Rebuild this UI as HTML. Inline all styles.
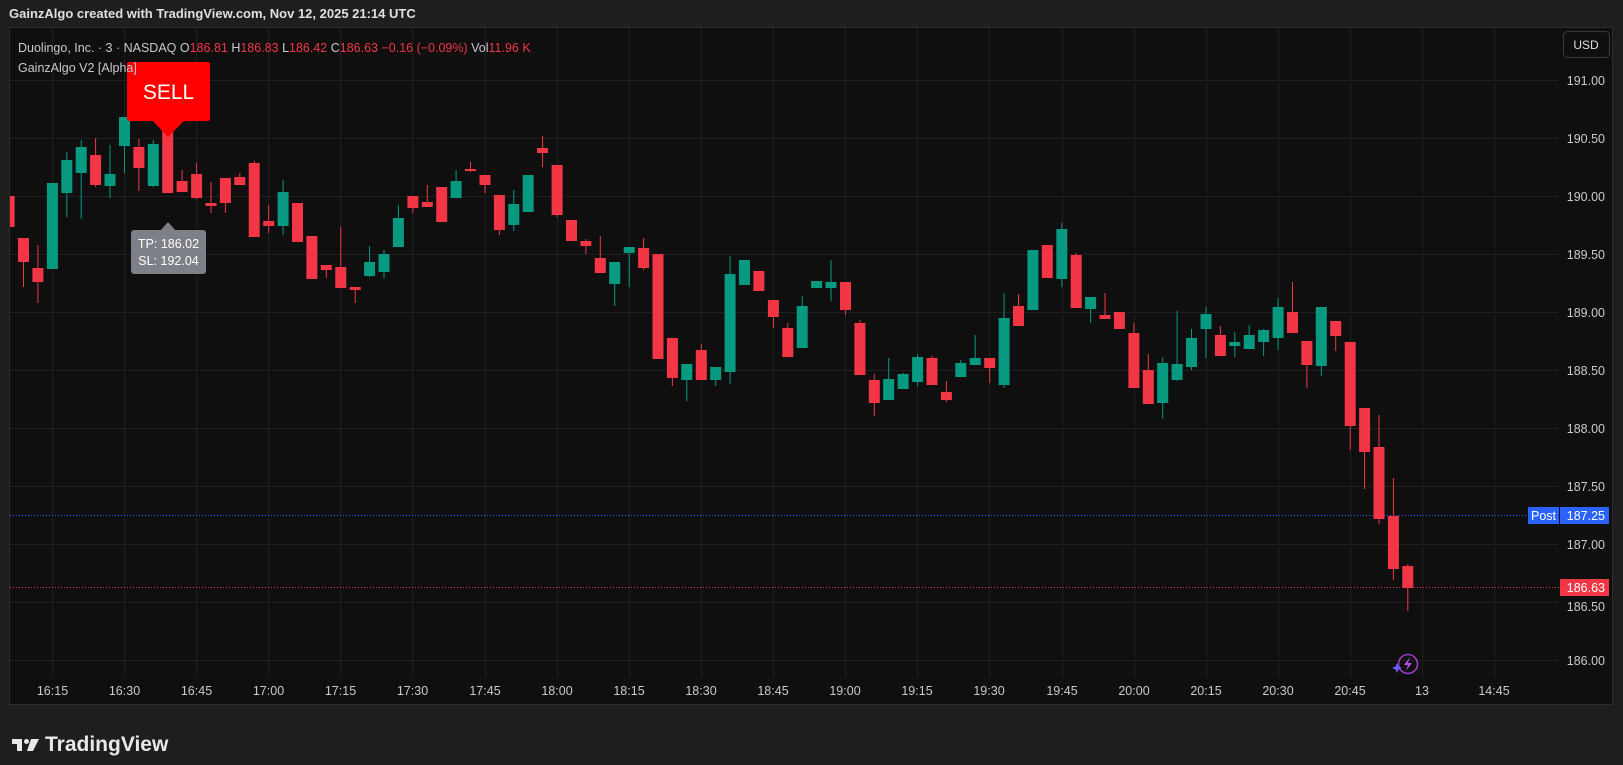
<!DOCTYPE html>
<html><head><meta charset="utf-8"><style>
html,body{margin:0;padding:0;background:#1e1e1e;width:1623px;height:765px;overflow:hidden;font-family:"Liberation Sans",sans-serif}
svg{position:absolute;left:0;top:0}
</style></head><body>
<svg width="1623" height="765" viewBox="0 0 1623 765" xmlns="http://www.w3.org/2000/svg" font-family="Liberation Sans, sans-serif">
<defs><clipPath id="c"><rect x="10" y="28" width="1550" height="650"/></clipPath></defs>
<rect x="0" y="0" width="1623" height="765" fill="#1e1e1e"/>
<text x="9" y="18" fill="#e0e0e0" font-size="13" font-weight="bold">GainzAlgo created with TradingView.com, Nov 12, 2025 21:14 UTC</text>
<rect x="9.5" y="27.5" width="1603" height="677" fill="#0f0f0f" stroke="#2c2c2c"/>
<g stroke="#1f1f1f" stroke-width="1">
<line x1="10" x2="1558" y1="80.5" y2="80.5"/><line x1="10" x2="1558" y1="138.5" y2="138.5"/><line x1="10" x2="1558" y1="196.5" y2="196.5"/><line x1="10" x2="1558" y1="254.5" y2="254.5"/><line x1="10" x2="1558" y1="312.5" y2="312.5"/><line x1="10" x2="1558" y1="370.5" y2="370.5"/><line x1="10" x2="1558" y1="428.5" y2="428.5"/><line x1="10" x2="1558" y1="486.5" y2="486.5"/><line x1="10" x2="1558" y1="544.5" y2="544.5"/><line x1="10" x2="1558" y1="602.5" y2="602.5"/><line x1="10" x2="1558" y1="660.5" y2="660.5"/>
<line y1="28" y2="678" x1="52.5" x2="52.5"/><line y1="28" y2="678" x1="124.5" x2="124.5"/><line y1="28" y2="678" x1="196.5" x2="196.5"/><line y1="28" y2="678" x1="268.5" x2="268.5"/><line y1="28" y2="678" x1="340.5" x2="340.5"/><line y1="28" y2="678" x1="412.5" x2="412.5"/><line y1="28" y2="678" x1="485.5" x2="485.5"/><line y1="28" y2="678" x1="557.5" x2="557.5"/><line y1="28" y2="678" x1="629.5" x2="629.5"/><line y1="28" y2="678" x1="701.5" x2="701.5"/><line y1="28" y2="678" x1="773.5" x2="773.5"/><line y1="28" y2="678" x1="845.5" x2="845.5"/><line y1="28" y2="678" x1="917.5" x2="917.5"/><line y1="28" y2="678" x1="989.5" x2="989.5"/><line y1="28" y2="678" x1="1062.5" x2="1062.5"/><line y1="28" y2="678" x1="1134.5" x2="1134.5"/><line y1="28" y2="678" x1="1206.5" x2="1206.5"/><line y1="28" y2="678" x1="1278.5" x2="1278.5"/><line y1="28" y2="678" x1="1350.5" x2="1350.5"/><line y1="28" y2="678" x1="1422.5" x2="1422.5"/><line y1="28" y2="678" x1="1494.5" x2="1494.5"/>
</g>
<line x1="10" x2="1528" y1="515.5" y2="515.5" stroke="#2962ff" stroke-dasharray="1,2"/>
<line x1="10" x2="1560" y1="587.5" y2="587.5" stroke="#f23645" stroke-dasharray="1,2"/>
<g clip-path="url(#c)">
<g fill="#f23645">
<rect x="3.6" y="196" width="11" height="31"/>
<rect x="23" y="262" width="1" height="25"/><rect x="18" y="238" width="11" height="24"/>
<rect x="37.4" y="245" width="1" height="58"/><rect x="32.4" y="268" width="11" height="14"/>
<rect x="95.1" y="138" width="1" height="49"/><rect x="90.1" y="155" width="11" height="30"/>
<rect x="138.4" y="139" width="1" height="52"/><rect x="133.4" y="147" width="11" height="21"/>
<rect x="162.2" y="120" width="11" height="73"/>
<rect x="181.6" y="170" width="1" height="22"/><rect x="176.6" y="181" width="11" height="11"/>
<rect x="196.1" y="163" width="1" height="36"/><rect x="191.1" y="174" width="11" height="24"/>
<rect x="210.5" y="182" width="1" height="31"/><rect x="205.5" y="203" width="11" height="3"/>
<rect x="224.9" y="178" width="1" height="35"/><rect x="219.9" y="178" width="11" height="25"/>
<rect x="239.3" y="173" width="1" height="12"/><rect x="234.3" y="177" width="11" height="8"/>
<rect x="253.7" y="161" width="1" height="76"/><rect x="248.7" y="163" width="11" height="74"/>
<rect x="268.2" y="205" width="1" height="28"/><rect x="263.2" y="221" width="11" height="5"/>
<rect x="292" y="203" width="11" height="39"/>
<rect x="306.4" y="236" width="11" height="43"/>
<rect x="325.8" y="265" width="1" height="13"/><rect x="320.8" y="265" width="11" height="5"/>
<rect x="340.3" y="227" width="1" height="61"/><rect x="335.3" y="267" width="11" height="21"/>
<rect x="354.7" y="287" width="1" height="16"/><rect x="349.7" y="287" width="11" height="3"/>
<rect x="412.4" y="196" width="1" height="17"/><rect x="407.4" y="196" width="11" height="12"/>
<rect x="426.8" y="185" width="1" height="22"/><rect x="421.8" y="202" width="11" height="5"/>
<rect x="436.2" y="187" width="11" height="35"/>
<rect x="470" y="162" width="1" height="10"/><rect x="465" y="169" width="11" height="2"/>
<rect x="484.5" y="175" width="1" height="18"/><rect x="479.5" y="175" width="11" height="10"/>
<rect x="498.9" y="195" width="1" height="40"/><rect x="493.9" y="195" width="11" height="35"/>
<rect x="542.1" y="136" width="1" height="31"/><rect x="537.1" y="148" width="11" height="5"/>
<rect x="556.6" y="165" width="1" height="52"/><rect x="551.6" y="165" width="11" height="50"/>
<rect x="566" y="220" width="11" height="21"/>
<rect x="585.4" y="239" width="1" height="15"/><rect x="580.4" y="241" width="11" height="5"/>
<rect x="599.8" y="236" width="1" height="37"/><rect x="594.8" y="258" width="11" height="15"/>
<rect x="643.1" y="238" width="1" height="32"/><rect x="638.1" y="248" width="11" height="20"/>
<rect x="652.5" y="254" width="11" height="105"/>
<rect x="671.9" y="338" width="1" height="48"/><rect x="666.9" y="338" width="11" height="40"/>
<rect x="700.8" y="344" width="1" height="36"/><rect x="695.8" y="350" width="11" height="30"/>
<rect x="753.4" y="271" width="11" height="20"/>
<rect x="772.9" y="300" width="1" height="28"/><rect x="767.9" y="300" width="11" height="17"/>
<rect x="787.3" y="323" width="1" height="34"/><rect x="782.3" y="328" width="11" height="29"/>
<rect x="845" y="282" width="1" height="33"/><rect x="840" y="282" width="11" height="28"/>
<rect x="859.4" y="320" width="1" height="55"/><rect x="854.4" y="323" width="11" height="52"/>
<rect x="873.8" y="374" width="1" height="42"/><rect x="868.8" y="380" width="11" height="23"/>
<rect x="931.5" y="356" width="1" height="29"/><rect x="926.5" y="358" width="11" height="27"/>
<rect x="945.9" y="381" width="1" height="21"/><rect x="940.9" y="392" width="11" height="8"/>
<rect x="989.2" y="358" width="1" height="25"/><rect x="984.2" y="358" width="11" height="10"/>
<rect x="1018" y="294" width="1" height="32"/><rect x="1013" y="306" width="11" height="20"/>
<rect x="1041.8" y="245" width="11" height="33"/>
<rect x="1075.7" y="253" width="1" height="55"/><rect x="1070.7" y="255" width="11" height="53"/>
<rect x="1104.5" y="293" width="1" height="26"/><rect x="1099.5" y="315" width="11" height="4"/>
<rect x="1113.9" y="312" width="11" height="17"/>
<rect x="1133.4" y="323" width="1" height="65"/><rect x="1128.4" y="333" width="11" height="55"/>
<rect x="1147.8" y="354" width="1" height="50"/><rect x="1142.8" y="370" width="11" height="34"/>
<rect x="1219.9" y="326" width="1" height="30"/><rect x="1214.9" y="335" width="11" height="21"/>
<rect x="1292" y="282" width="1" height="51"/><rect x="1287" y="312" width="11" height="21"/>
<rect x="1306.4" y="341" width="1" height="47"/><rect x="1301.4" y="341" width="11" height="24"/>
<rect x="1335.2" y="321" width="1" height="30"/><rect x="1330.2" y="321" width="11" height="15"/>
<rect x="1349.7" y="342" width="1" height="108"/><rect x="1344.7" y="342" width="11" height="84"/>
<rect x="1364.1" y="408" width="1" height="81"/><rect x="1359.1" y="408" width="11" height="44"/>
<rect x="1378.5" y="415" width="1" height="109"/><rect x="1373.5" y="447" width="11" height="72"/>
<rect x="1392.9" y="478" width="1" height="102"/><rect x="1387.9" y="516" width="11" height="53"/>
<rect x="1407.3" y="564" width="1" height="47"/><rect x="1402.3" y="566" width="11" height="22"/>
</g>
<g fill="#089981">
<rect x="46.9" y="183" width="11" height="86"/>
<rect x="66.3" y="152" width="1" height="65"/><rect x="61.3" y="160" width="11" height="33"/>
<rect x="80.7" y="140" width="1" height="79"/><rect x="75.7" y="147" width="11" height="26"/>
<rect x="109.5" y="145" width="1" height="53"/><rect x="104.5" y="174" width="11" height="12"/>
<rect x="124" y="117" width="1" height="56"/><rect x="119" y="117" width="11" height="29"/>
<rect x="152.8" y="140" width="1" height="47"/><rect x="147.8" y="144" width="11" height="42"/>
<rect x="282.6" y="180" width="1" height="55"/><rect x="277.6" y="192" width="11" height="34"/>
<rect x="369.1" y="246" width="1" height="31"/><rect x="364.1" y="262" width="11" height="14"/>
<rect x="383.5" y="250" width="1" height="28"/><rect x="378.5" y="254" width="11" height="18"/>
<rect x="397.9" y="205" width="1" height="42"/><rect x="392.9" y="218" width="11" height="29"/>
<rect x="455.6" y="170" width="1" height="28"/><rect x="450.6" y="181" width="11" height="17"/>
<rect x="513.3" y="190" width="1" height="41"/><rect x="508.3" y="204" width="11" height="21"/>
<rect x="522.7" y="175" width="11" height="37"/>
<rect x="614.2" y="262" width="1" height="44"/><rect x="609.2" y="262" width="11" height="22"/>
<rect x="628.7" y="247" width="1" height="40"/><rect x="623.7" y="247" width="11" height="6"/>
<rect x="686.3" y="364" width="1" height="37"/><rect x="681.3" y="364" width="11" height="16"/>
<rect x="715.2" y="367" width="1" height="19"/><rect x="710.2" y="367" width="11" height="13"/>
<rect x="729.6" y="256" width="1" height="128"/><rect x="724.6" y="274" width="11" height="98"/>
<rect x="739" y="260" width="11" height="25"/>
<rect x="801.7" y="296" width="1" height="52"/><rect x="796.7" y="306" width="11" height="42"/>
<rect x="811.1" y="281" width="11" height="7"/>
<rect x="830.5" y="260" width="1" height="41"/><rect x="825.5" y="282" width="11" height="6"/>
<rect x="888.2" y="358" width="1" height="42"/><rect x="883.2" y="379" width="11" height="21"/>
<rect x="902.6" y="373" width="1" height="16"/><rect x="897.6" y="374" width="11" height="15"/>
<rect x="917.1" y="354" width="1" height="32"/><rect x="912.1" y="357" width="11" height="25"/>
<rect x="960.3" y="360" width="1" height="17"/><rect x="955.3" y="363" width="11" height="14"/>
<rect x="974.7" y="335" width="1" height="30"/><rect x="969.7" y="358" width="11" height="7"/>
<rect x="1003.6" y="293" width="1" height="95"/><rect x="998.6" y="318" width="11" height="67"/>
<rect x="1027.4" y="250" width="11" height="60"/>
<rect x="1061.3" y="223" width="1" height="64"/><rect x="1056.3" y="229" width="11" height="50"/>
<rect x="1090.1" y="297" width="1" height="26"/><rect x="1085.1" y="297" width="11" height="12"/>
<rect x="1162.2" y="357" width="1" height="62"/><rect x="1157.2" y="363" width="11" height="40"/>
<rect x="1176.6" y="311" width="1" height="70"/><rect x="1171.6" y="364" width="11" height="16"/>
<rect x="1191" y="329" width="1" height="41"/><rect x="1186" y="338" width="11" height="29"/>
<rect x="1205.5" y="307" width="1" height="51"/><rect x="1200.5" y="314" width="11" height="15"/>
<rect x="1234.3" y="332" width="1" height="25"/><rect x="1229.3" y="342" width="11" height="4"/>
<rect x="1248.7" y="325" width="1" height="24"/><rect x="1243.7" y="335" width="11" height="14"/>
<rect x="1263.1" y="329" width="1" height="27"/><rect x="1258.1" y="330" width="11" height="12"/>
<rect x="1277.6" y="298" width="1" height="52"/><rect x="1272.6" y="307" width="11" height="31"/>
<rect x="1320.8" y="307" width="1" height="69"/><rect x="1315.8" y="307" width="11" height="59"/>
</g>
</g>
<!-- SELL label -->
<rect x="127" y="62" width="83" height="59" rx="2" fill="#ff0000"/>
<polygon points="152,120 185,120 168,137" fill="#ff0000"/>
<text x="168.5" y="99" fill="#fff" font-size="21" text-anchor="middle">SELL</text>
<!-- TP/SL -->
<rect x="131" y="230" width="75" height="44" rx="3" fill="#7e8087"/>
<polygon points="160,231 176,231 168,222" fill="#7e8087"/>
<text x="168.5" y="248" fill="#fff" font-size="12.5" text-anchor="middle">TP: 186.02</text>
<text x="168.5" y="265" fill="#fff" font-size="12.5" text-anchor="middle">SL: 192.04</text>
<!-- legend -->
<text x="18" y="52" font-size="12.5" fill="#c8cad0">Duolingo, Inc. · 3 · NASDAQ  <tspan>O</tspan><tspan fill="#f23645">186.81</tspan>  <tspan>H</tspan><tspan fill="#f23645">186.83</tspan>  <tspan>L</tspan><tspan fill="#f23645">186.42</tspan>  <tspan>C</tspan><tspan fill="#f23645">186.63  −0.16 (−0.09%)</tspan>  <tspan>Vol</tspan><tspan fill="#f23645">11.96 K</tspan></text>
<text x="18" y="72" font-size="12.5" fill="#c8cad0">GainzAlgo V2 [Alpha]</text>
<!-- USD -->
<rect x="1563.5" y="31.5" width="46" height="26" rx="4" fill="#0f0f0f" stroke="#3a3a3a"/>
<text x="1586" y="49" font-size="12" fill="#e0e0e0" text-anchor="middle">USD</text>
<g font-size="12.5" fill="#c8cad0" text-anchor="end">
<text x="1605" y="85">191.00</text><text x="1605" y="143">190.50</text><text x="1605" y="201">190.00</text><text x="1605" y="259">189.50</text><text x="1605" y="317">189.00</text><text x="1605" y="375">188.50</text><text x="1605" y="433">188.00</text><text x="1605" y="491">187.50</text><text x="1605" y="549">187.00</text><text x="1605" y="611">186.50</text><text x="1605" y="665">186.00</text>
</g>
<rect x="1528" y="507" width="31" height="17" fill="#2962ff"/>
<rect x="1560" y="507" width="49" height="17" fill="#2962ff"/>
<text x="1543.5" y="520" font-size="12.5" fill="#fff" text-anchor="middle">Post</text>
<text x="1605" y="520" font-size="12.5" fill="#fff" text-anchor="end">187.25</text>
<rect x="1560" y="579" width="49" height="17" fill="#f23645"/>
<text x="1605" y="592" font-size="12.5" fill="#fff" text-anchor="end">186.63</text>
<!-- time axis -->
<g font-size="12.5" fill="#c8cad0" text-anchor="middle">
<text x="52.5" y="695">16:15</text><text x="124.5" y="695">16:30</text><text x="196.5" y="695">16:45</text><text x="268.5" y="695">17:00</text><text x="340.5" y="695">17:15</text><text x="412.5" y="695">17:30</text><text x="485" y="695">17:45</text><text x="557" y="695">18:00</text><text x="629" y="695">18:15</text><text x="701" y="695">18:30</text><text x="773" y="695">18:45</text><text x="845" y="695">19:00</text><text x="917" y="695">19:15</text><text x="989" y="695">19:30</text><text x="1062" y="695">19:45</text><text x="1134" y="695">20:00</text><text x="1206" y="695">20:15</text><text x="1278" y="695">20:30</text><text x="1350" y="695">20:45</text><text x="1422" y="695">13</text><text x="1494" y="695">14:45</text>
</g>
<!-- icon -->
<circle cx="1408" cy="664" r="9.5" fill="none" stroke="#9c3fc4" stroke-width="1.6"/>
<path d="M1410 657 L1404 665 L1408 665 L1406 671 L1412 663 L1408 663 Z" fill="#b04fe0"/>
<path d="M1397 663 L1398.5 666.5 L1402 668 L1398.5 669.5 L1397 673 L1395.5 669.5 L1392 668 L1395.5 666.5 Z" fill="#6a5cff"/>
<!-- footer logo -->
<g fill="#e8e8e8">
<path d="M12 739 h10 v12 h-5 v-7 h-5 z"/>
<circle cx="26.5" cy="741.5" r="2.5"/>
<path d="M31 739 h8 l-6 12 h-6 z"/>
</g>
<text x="45" y="751" font-size="21" font-weight="bold" fill="#e8e8e8">TradingView</text>
</svg>
</body></html>
